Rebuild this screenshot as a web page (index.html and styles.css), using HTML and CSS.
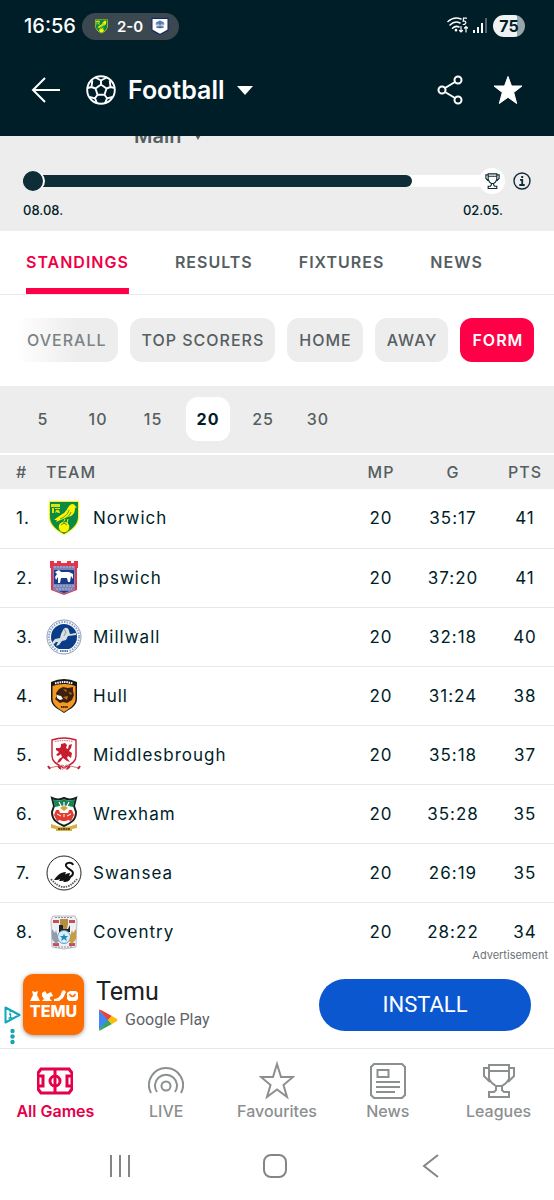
FILE: index.html
```html
<!DOCTYPE html>
<html lang="en">
<head>
<meta charset="utf-8">
<meta name="viewport" content="width=device-width, initial-scale=1">
<title>Football standings</title>
<link rel="stylesheet" href="styles.css">
</head>
<body>
<svg class="defs" aria-hidden="true">
  <symbol id="norwich" viewBox="0 0 36 36">
    <path d="M3 1h30v16c0 9-8 14-15 18C11 31 3 26 3 17z" fill="#fff200"/>
    <path d="M4 2h28v15c0 8-7 13-14 17C11 30 4 25 4 17z" fill="#0a8a43"/>
    <path d="M5 4h9v3H5z M6 8h2v5H6z m3 0h5v1H9z m1 2h3l1 3h-2l-1-1-2 1z" fill="#fff200" opacity=".85"/>
    <path d="M24 5c2-2 5-1 5 1l2 1-2 1c0 5-2 8-7 9l-5 2-7 3 1-2-3 0c3-3 7-5 10-7 3-3 4-6 6-8z" fill="#fff200"/>
    <path d="M23 10c-1 4-4 7-9 9M25 12c-1 3-3 5-6 7" fill="none" stroke="#0a8a43" stroke-width=".8"/>
    <path d="M19 19l-2 4m5-4l-1 4" stroke="#fff200"/>
    <circle cx="18" cy="27" r="5.300" fill="#fff200"/>
    <path d="M15 25l3-2 3 2m-3-4v3" fill="none" stroke="#0a8a43" stroke-width=".8"/>
  </symbol>
  <symbol id="trophy" viewBox="0 0 32 34">
    <path d="M7 2h19v5H7zM7 7v7l3 6 4 3h5l4-3 3-6V7M7 4H2v8l5 5M26 4h5v8l-5 5M14 23v3l-2 3H7v5h19v-5h-5l-2-3v-3" transform="scale(.97)"/>
  </symbol>
</svg>

<header class="top">
  <div class="status">
    <span class="clock">16:56</span>
    <span class="live">
      <svg class="live-home" viewBox="0 0 36 36"><use href="#norwich"/></svg>
      <span>2-0</span>
      <svg class="live-away" viewBox="0 0 20 20"><path d="M1 1h18v13l-9 5-9-5z" fill="#fff" stroke="#172a64" stroke-width="1.400"/><path d="M5 8c0-6 10-6 10 0zM6 9h8v2l-2 1H8l-2-1z" fill="#7896c4"/><path d="M6 6h8M10 3v9M6 11h8" stroke="#3b5687" stroke-width=".7"/></svg>
    </span>
    <span class="spacer"></span>
    <svg class="wifi" viewBox="0 0 22 18" fill="none" stroke="#fff" stroke-width="1.500" stroke-linecap="round"><path d="M1 4.500c4-3.500 9-4.200 13-2.500M3 8c3-3 7-3.500 10-2M5.500 11.300c2-2 4.500-2.300 6.500-1.300"/><circle cx="9" cy="13.200" r=".6"/><path d="M19.500 1.200h-3l-.3 3c3-1 4 3 0 3.300M14 9.500v5.500m-1.500-1.500L14 15l1.500-1.500M19 15V9.500m-1.500 1.500L19 9.500l1.500 1.500" stroke-width="1.200"/></svg>
    <svg class="signal" viewBox="0 0 14 16"><path d="M0 12h2v3H0zM4 9h2v6H4zM8 5h2v10H8z" fill="#fff"/><path d="M12 0h2v15h-2z" fill="#53656c"/></svg>
    <span class="battery">75</span>
  </div>
  <div class="bar">
    <button class="icon-btn" aria-label="Back"><svg class="back" viewBox="0 0 30 26" fill="none" stroke="#fff" stroke-width="2"><path d="M29 13H2M14 1L2 13l12 12"/></svg></button>
    <button class="sport">
      <svg class="ball" viewBox="0 0 30 30" fill="none" stroke="#fff" stroke-width="1.900" stroke-linejoin="round"><circle cx="15" cy="15" r="13.800"/><path d="M15 9.500l5.500 4-2 6.300h-7l-2-6.300zM15 9.500V5.500M20.500 13.500l4-1.500M18.500 19.800l2.500 3.500M11.500 19.800L9 23.300M9.500 13.500l-4-1.500M9.500 2.500L15 5.500l5.500-3M28.600 13l-4.100-1-.8-6.500M1.400 13l4.100-1 .8-6.500M26.500 22l-5.500 1.300-2 5M3.500 22L9 23.300l2 5"/></svg>
      <span>Football</span>
      <svg class="caret" viewBox="0 0 16 9"><path d="M0 0h16L8 9z" fill="#fff"/></svg>
    </button>
    <span class="spacer"></span>
    <button class="icon-btn" aria-label="Share"><svg class="share" viewBox="0 0 26 30" fill="none" stroke="#fff" stroke-width="2"><circle cx="21" cy="5" r="3.500"/><circle cx="5" cy="15" r="3.500"/><circle cx="21" cy="25" r="3.500"/><path d="M8 13l10-6M8 17l10 6"/></svg></button>
    <button class="icon-btn" aria-label="Favourite"><svg class="fav" viewBox="0 0 30 30"><path d="M15 1.500l3.500 9.500H29l-8.300 6.500 3 11L15 22.300l-8.700 6.200 3-11L1 11h10.500z" fill="#fff" stroke="#fff" stroke-linejoin="round"/></svg></button>
  </div>
</header>

<main>
  <section class="season">
    <div class="stage"><span>Main</span><svg viewBox="0 0 10 16"><path d="M1 4h8l-4 7z" fill="#555e61"/></svg></div>
    <div class="timeline">
      <div class="track" role="progressbar" aria-label="Season progress" aria-valuenow="81">
        <div class="fill"></div>
        <span class="start"></span>
        <span class="finish"><svg viewBox="0 0 32 34" fill="none" stroke="#0f2d37" stroke-width="2.500"><use href="#trophy"/></svg></span>
      </div>
      <button class="icon-btn" aria-label="Information"><svg class="info" viewBox="0 0 18 18" fill="none" stroke="#0f2d37"><circle cx="9" cy="9" r="8" stroke-width="1.400"/><path d="M7 7.800h2.200V13M6.300 13h5.400" stroke-width="1.800"/><path d="M8.200 5h2" stroke-width="2"/></svg></button>
    </div>
    <div class="dates"><span>08.08.</span><span>02.05.</span></div>
  </section>

  <nav class="tabs">
    <a href="#standings" class="active">STANDINGS</a><a href="#results">RESULTS</a><a href="#fixtures">FIXTURES</a><a href="#news">NEWS</a>
  </nav>

  <div class="chips">
    <button class="faded">OVERALL</button><button>TOP SCORERS</button><button>HOME</button><button>AWAY</button><button class="active">FORM</button>
  </div>

  <div class="counts">
    <button>5</button><button>10</button><button>15</button><button class="active">20</button><button>25</button><button>30</button>
  </div>

  <table class="standings">
    <colgroup><col class="col-rank"><col class="col-crest"><col><col class="col-num"><col class="col-goals"><col class="col-num"></colgroup>
    <thead><tr><th class="rank">#</th><th class="team" colspan="2">TEAM</th><th>MP</th><th>G</th><th>PTS</th></tr></thead>
    <tbody>
      <tr><td class="rank">1.</td><td class="crest"><svg viewBox="0 0 36 36"><use href="#norwich"/></svg></td><td class="name">Norwich</td><td>20</td><td>35:17</td><td>41</td></tr>
      <tr><td class="rank">2.</td><td class="crest"><svg viewBox="0 0 36 36"><path d="M4 1h4v2h3V1h4v2h6V1h4v2h3V1h4v7h-1v22l-13 5-13-5V8H4z" fill="#e6344d"/><path d="M7 6h22v24l-11 4-11-4z" fill="#7b82b6"/><path d="M8 10h20v14H8z" fill="#173c8b"/><path d="M9 12l4-2 2 2h8l4 2v5l-2-3-1 6h-2l-1-4h-6l-1 5h-2v-6l-2 3-1-3 2-3z" fill="#fff"/><path d="M8 7h20M8 26h20M10 29h16" stroke="#d2d5e7" stroke-dasharray="2 1" stroke-width=".7"/><path d="M13 31h10l-5 2z" fill="#173c8b"/></svg></td><td class="name">Ipswich</td><td>20</td><td>37:20</td><td>41</td></tr>
      <tr><td class="rank">3.</td><td class="crest"><svg viewBox="0 0 36 36"><circle cx="18" cy="18" r="17" fill="#fff" stroke="#6d84a8" stroke-width=".8"/><circle cx="18" cy="18" r="15" fill="none" stroke="#8ca2c5" stroke-width="2" stroke-dasharray="1.500 1.200"/><circle cx="18" cy="18" r="13" fill="#0a3c87"/><path d="M13 32h10" stroke="#fff" stroke-width="4"/><path d="M14 32h8" stroke="#4f71aa" stroke-width="2" stroke-dasharray="1.500 .7"/><path d="M17 11c2-4 6-2 6 1l1 3 6-1v2l-8 1-2 4-4 1-3 4-3 1 2-4-2 0-3 3-2-1 4-5 5-1 1-4z" fill="#d8dfdf"/><path d="M18 10l2 3-2 4" fill="none" stroke="#8a9997"/></svg></td><td class="name">Millwall</td><td>20</td><td>32:18</td><td>40</td></tr>
      <tr><td class="rank">4.</td><td class="crest"><svg viewBox="0 0 36 36"><path d="M5 4q13-6 26 0v17c0 7-7 10-13 14C12 31 5 28 5 21z" fill="#171717"/><path d="M6.500 8q12-4 23 0v13c0 5-5 9-11.500 13C11 30 6.500 26 6.500 21z" fill="#f49a22"/><path d="M9 5.500q9-3 18 0" fill="none" stroke="#fff" stroke-width="2" stroke-dasharray="1.500 .8"/><path d="M13 11l4-2 5 1 5-1v4l1 4-2 5-5 3-4-1-3 1-5-4 2-3-1-3z" fill="#3c210f"/><path d="M17 11l4 1-1 2zM22 14l4 1-1 2zM17 19l5-1-1 4z" fill="#bc6b1c"/><path d="M11 17l4 1 2 3-3 1-3-2z" fill="#fff"/><path d="M15 29h7" stroke="#3c210f" stroke-width="2" stroke-dasharray="1.500 .6"/></svg></td><td class="name">Hull</td><td>20</td><td>31:24</td><td>38</td></tr>
      <tr><td class="rank">5.</td><td class="crest"><svg viewBox="0 0 36 36"><path d="M6 3q12-4 24 0v16c0 6-5 8-12 12C11 27 6 25 6 19z" fill="#fff" stroke="#c51e30" stroke-width="1.400"/><path d="M9 4.500q9-2 18 0" fill="none" stroke="#da7a83" stroke-width="1.200" stroke-dasharray="1.500 .8"/><path d="M15 7l4-1 2 2-1 3 2 1 1-4 3-1-1 4-2 3 3 2-1 5-3-2-1 2 3 4-3-1-4-3-3 4-3 1 2-4 3-2-1-3-3 2-2-1 3-3-3-2v-2h4l1-2z" fill="#c81c2f"/><path d="M3 31l14-3 4 5M33 31l-13-3-4 5" fill="none" stroke="#d17a82"/><path d="M2 29l2 3M34 29l-2 3M12 29l3 3M24 29l-3 3" stroke="#c51e30" stroke-width="2"/></svg></td><td class="name">Middlesbrough</td><td>20</td><td>35:18</td><td>37</td></tr>
      <tr><td class="rank">6.</td><td class="crest"><svg viewBox="0 0 36 36"><path d="M6 2q6 3 12 0 6 3 12 0l-2 8 2 6c0 8-5 11-12 14C11 27 6 24 6 16l2-6z" fill="#fff" stroke="#17231c" stroke-width="2"/><path d="M7 3q6 3 11 0 5 3 11 0l-2 8q-9-3-18 0z" fill="#188454"/><path d="M18 10V6m-3 4l-2-4m8 4l2-4" stroke="#fff" stroke-width="1.200"/><path d="M8 19l2-5 3 0 1 3h8l1-3h3l2 5-3 6-3-1-2 1h-4l-2-1-3 1z" fill="#e33b2f"/><path d="M11 18l4 2m10-2l-4 2M18 18v3" stroke="#fff"/><path d="M14 12q4-4 8 0l-4 3z" fill="#d2a63a"/><path d="M5 28l6 2q7 2 14 0l6-2v4l-5 1v2H10v-2l-5-1z" fill="#d7b140"/><path d="M12 33h12" stroke="#655323" stroke-width="2" stroke-dasharray="2 .5"/></svg></td><td class="name">Wrexham</td><td>20</td><td>35:28</td><td>35</td></tr>
      <tr><td class="rank">7.</td><td class="crest"><svg viewBox="0 0 36 36"><circle cx="18" cy="18" r="17" fill="#fff" stroke="#222"/><path d="M27 10c-1-3-8-3-7 1 1 3 7 4 7 7 0 2-2 4-6 5" fill="none" stroke="#111" stroke-width="2"/><path d="M20 17c-6 0-9 4-12 8 6 0 10-1 12-8zM24 18c-5 0-8 4-11 8 6 0 10-1 11-8zM25 22c-3-1-5 2-8 5 5 0 7-1 8-5z" fill="#111"/><path d="M5 24q13 16 26 0" fill="none" stroke="#555" stroke-width="1.800" stroke-dasharray="1.500 1"/></svg></td><td class="name">Swansea</td><td>20</td><td>26:19</td><td>35</td></tr>
      <tr><td class="rank">8.</td><td class="crest"><svg viewBox="0 0 36 36"><path d="M7 2h22l2 4-1 27-12 2-12-2L5 6z" fill="#eef0f2" stroke="#b8bcc2"/><path d="M7 6h6v3H7zM23 6h6v3h-6zM7 29h6v3H7zM23 29h6v3h-6z" fill="#c2515d"/><path d="M14 5h8v5l-1 5h-6l-1-5z" fill="#b58d3e"/><path d="M13 11h4v4h5l2-4v7H13z" fill="#20242c"/><circle cx="18" cy="23" r="6.500" fill="#d7effb" stroke="#609ebd"/><path d="M18 19.500l1 2.500h3l-2 2 1 3-3-2-3 2 1-3-2-2h3z" fill="#2388bd"/><path d="M6 15l3 4 1-3 3 11-3 3-4-5z" fill="#929cad"/><path d="M30 15l-3 4-1-3-3 11 3 3 4-5z" fill="#c79c45"/><path d="M9 3.500h18M9 33h18" stroke="#8d8fa0" stroke-dasharray="2 1"/></svg></td><td class="name">Coventry</td><td>20</td><td>28:22</td><td>34</td></tr>
    </tbody>
  </table>
</main>

<aside class="ad">
  <span class="ad-label">Advertisement</span>
  <svg class="choices" viewBox="0 0 17 40" fill="none" stroke="#14a5b8"><path d="M1.500 2.500v15l14-7.500z" stroke-width="2" stroke-linejoin="round"/><path d="M5 9h1.500v4M4.500 13h4M5.500 6.500H7" stroke-width="1.400"/><g fill="#14a5b8" stroke="none"><circle cx="8.500" cy="26" r="2.200"/><circle cx="8.500" cy="31.500" r="2.200"/><circle cx="8.500" cy="37" r="2.200"/></g></svg>
  <div class="app-icon">
    <svg viewBox="0 0 48 12" fill="#fff"><path d="M2 1l3 1 3-1-1 4 3 6H0l3-6zM12 3l3-2 2 3 4-2 2 4-3 1v2l2 2H12l2-2-2-3zM34 0l2 2-3 6-4 3h-5v-2c5 0 7-4 8-8zM40 1h6l2 2v6l-2 2h-7l-2-2V3z"/><path d="M39.500 4q3 5 6 0" fill="none" stroke="#ff6c00" stroke-width="1.500"/></svg>
    <span>TEMU</span>
  </div>
  <div class="app">
    <span class="app-name">Temu</span>
    <span class="store"><svg viewBox="0 0 20 22"><path d="M1 1l10 10L1 21z" fill="#4285f4"/><path d="M1 1q0-1 2 0l11 6-4 4z" fill="#ea4335"/><path d="M1 21q0 1 2 0l11-6-4-4z" fill="#34a853"/><path d="M14 7l5 3q1 1 0 2l-5 3-4-4z" fill="#fbbc04"/></svg>Google Play</span>
  </div>
  <button class="install">INSTALL</button>
</aside>

<nav class="bottom">
  <a href="#games" class="active"><svg viewBox="0 0 36 40"><path d="M4 8h28l3 4v16l-3 4H4l-3-4V12zM18 8v24M1 15h5v10H1M35 15h-5v10h5"/><circle cx="18" cy="20" r="5"/></svg>All Games</a>
  <a href="#live"><svg viewBox="0 0 36 40"><circle cx="18" cy="25" r="4.500"/><path d="M9 31a11 11 0 1 1 18 0M3 32a17 17 0 1 1 30 0"/></svg>LIVE</a>
  <a href="#favourites"><svg viewBox="0 0 36 40"><path d="M18 3l4 13h12l-9.500 8L28 36l-10-7.500L8 36l3.500-12L2 16h12z"/></svg>Favourites</a>
  <a href="#news-feed"><svg viewBox="0 0 36 40"><path d="M4 3h28l3 3v28l-3 3H4l-3-3V6zM7.500 9h11v7h-11zM6 21h24M6 26h24M6 31h19"/></svg>News</a>
  <a href="#leagues"><svg viewBox="0 0 36 40"><path d="M8 4h20v6H8zM8 10v8l3 4 4 3h6l4-3 3-4v-8M8 7H3v8l6 6M28 7h5v8l-6 6M15 25v4l-2 2H8v5h20v-5h-5l-2-2v-4"/></svg>Leagues</a>
</nav>

<div class="system">
  <button aria-label="Recent apps"><svg viewBox="0 0 24 24"><path d="M3 1v22M12 1v22M21 1v22"/></svg></button>
  <button aria-label="Home"><svg viewBox="0 0 24 24"><rect x="1" y="1" width="22" height="22" rx="7"/></svg></button>
  <button aria-label="System back"><svg viewBox="0 0 24 24"><path d="M19 1L5 12l14 11"/></svg></button>
</div>
</body>
</html>
```

FILE: styles.css
```css
* { box-sizing: border-box; }
body {
  margin: 0;
  min-height: 100vh;
  background: #fff;
  color: #001e28;
  font-family: Inter, "Noto Sans", sans-serif;
  font-size: 16px;
}
button {
  margin: 0;
  padding: 0;
  border: 0;
  background: none;
  color: inherit;
  font: inherit;
}
a { color: inherit; text-decoration: none; }
svg { display: block; }
.defs { display: none; }
.spacer { flex: 1; }

.top { background: #001e28; color: #fff; padding-bottom: 8px; }
.status {
  display: flex;
  align-items: center;
  height: 52px;
  padding: 0 29px 0 24px;
}
.clock { font-size: 20px; font-weight: 500; margin-right: 6px; }
.live {
  display: flex;
  align-items: center;
  gap: 8px;
  height: 27px;
  padding: 0 10px 0 12px;
  border-radius: 14px;
  background: #3b484f;
  font-size: 15px;
  font-weight: 600;
}
.live-home { width: 15px; height: 15px; }
.live-away { width: 18px; height: 19px; }
.wifi { width: 22px; height: 18px; margin-right: 4px; }
.signal { width: 14px; height: 16px; margin-right: 6px; }
.battery {
  width: 32px;
  border-radius: 11px;
  background: linear-gradient(90deg, #eef2f3 75%, #98a6aa 75%);
  color: #001e28;
  font-weight: 700;
  line-height: 22px;
  text-align: center;
}
.bar {
  display: flex;
  align-items: center;
  height: 76px;
  padding: 0 31px;
}
.back { width: 30px; height: 26px; }
.sport {
  display: flex;
  align-items: center;
  gap: 12px;
  margin-left: 25px;
  font-size: 25px;
  font-weight: 600;
}
.ball { width: 30px; height: 30px; }
.caret { width: 16px; height: 9px; }
.share { width: 26px; height: 30px; margin-right: 30px; }
.fav { width: 30px; height: 30px; }

.season { background: #ededed; height: 95px; }
.stage {
  display: flex;
  align-items: flex-end;
  gap: 12px;
  height: 9px;
  padding-left: 134px;
  overflow: hidden;
  color: #555e61;
  font-size: 20px;
  font-weight: 600;
  line-height: 18px;
}
.stage svg { width: 10px; height: 16px; }
.timeline {
  display: flex;
  align-items: center;
  gap: 10px;
  margin-top: 27px;
  padding: 0 23px;
}
.track {
  position: relative;
  flex: 1;
  height: 12px;
  border-radius: 6px;
  background: #fff;
}
.fill { width: 81%; height: 12px; border-radius: 6px; background: #0f2d37; }
.start, .finish { position: absolute; border-radius: 50%; }
.start {
  top: -4px;
  left: 0;
  width: 20px;
  height: 20px;
  background: #0f2d37;
  box-shadow: 2px 0 0 #fff;
}
.finish {
  top: -7px;
  right: -2px;
  display: grid;
  place-items: center;
  width: 26px;
  height: 26px;
  background: #fff;
}
.finish svg { width: 15px; height: 16px; }
.info { width: 18px; height: 18px; }
.dates {
  display: flex;
  justify-content: space-between;
  margin-top: 12px;
  padding: 0 51px 0 23px;
  font-size: 13px;
  font-weight: 500;
  line-height: 16px;
}

.tabs {
  display: flex;
  gap: 46px;
  height: 64px;
  padding-left: 26px;
  border-bottom: 1px solid #e9eaeb;
  color: #555e61;
  font-weight: 600;
  line-height: 62px;
}
.tabs a, .chips button, .counts button, .standings { letter-spacing: 1px; }
.tabs .active {
  color: #ee0046;
  background: linear-gradient(#ff0046, #ff0046) bottom / 100% 6px no-repeat;
}

.chips {
  display: flex;
  gap: 12px;
  padding: 23px 15px 24px;
}
.chips button {
  height: 44px;
  padding: 0 11px 0 12px;
  border-radius: 12px;
  background: #ededed;
  color: #555e61;
  font-weight: 500;
  white-space: nowrap;
}
.chips .active { background: #ff0046; color: #fff; font-weight: 600; }
.chips .faded {
  background: linear-gradient(90deg, #fff, #ededed 60%);
  color: #7c8385;
}

.counts {
  display: flex;
  gap: 11px;
  padding: 11px 21px 12px;
  background: #ededed;
}
.counts button {
  width: 44px;
  height: 44px;
  border-radius: 12px;
  color: #555e61;
  font-weight: 500;
}
.counts .active { background: #fff; color: #001e28; font-weight: 700; }

.standings {
  width: 100%;
  margin-top: 2px;
  border-collapse: collapse;
  table-layout: fixed;
  font-size: 18px;
  text-align: center;
}
.col-rank { width: 46px; }
.col-crest { width: 34px; }
.col-num { width: 58px; }
.col-goals { width: 86px; }
.standings th {
  height: 34px;
  padding: 0;
  background: #ededed;
  color: #555e61;
  font-size: 16px;
  font-weight: 500;
}
.standings td { height: 59px; padding: 0; font-size: 17px; }
.standings tbody tr + tr { border-top: 1px solid #e6e8e9; }
.standings .rank { padding-left: 16px; text-align: left; }
.standings .team { text-align: left; }
.standings .name { padding-left: 13px; text-align: left; }
.crest svg { width: 36px; height: 36px; }

.ad {
  position: relative;
  display: flex;
  align-items: center;
  height: 87px;
  padding: 0 23px 0 4px;
}
.ad-label {
  position: absolute;
  top: -13px;
  right: 6px;
  color: #6d7476;
  font-size: 11px;
  line-height: 14px;
}
.choices { align-self: flex-end; width: 17px; height: 40px; margin: 0 2px 3px 0; }
.app-icon {
  display: flex;
  flex-direction: column;
  align-items: center;
  justify-content: center;
  width: 61px;
  height: 61px;
  border-radius: 10px;
  background: #ff6c00;
  box-shadow: 0 1px 4px #0006;
  color: #fff;
  font-size: 16px;
  font-weight: 800;
  line-height: 18px;
}
.app-icon svg { width: 48px; height: 12px; }
.app { display: flex; flex-direction: column; margin-left: 12px; }
.app-name { color: #202124; font-family: Roboto, sans-serif; font-size: 25px; line-height: 30px; }
.store {
  display: flex;
  align-items: center;
  gap: 7px;
  padding-left: 2px;
  color: #5f6368;
  font-family: Roboto, sans-serif;
  font-size: 16px;
  line-height: 26px;
}
.store svg { width: 20px; height: 22px; }
.install {
  width: 212px;
  height: 52px;
  margin-left: auto;
  border-radius: 26px;
  background: #0b57d0;
  color: #fff;
  font-family: Roboto, sans-serif;
  font-size: 22px;
}

.bottom {
  display: grid;
  grid-template-columns: repeat(5, 1fr);
  padding: 12px 0 11px;
  border-top: 1px solid #e6e8e9;
  color: #8c8f90;
  font-size: 16px;
  font-weight: 500;
  line-height: 20px;
}
.bottom a { display: flex; flex-direction: column; align-items: center; }
.bottom .active { color: #e4004b; font-weight: 600; }
.bottom svg {
  width: 36px;
  height: 40px;
  fill: none;
  stroke: currentColor;
  stroke-width: 2;
}
.bottom .active svg { stroke-width: 3; }
.system {
  display: grid;
  grid-template-columns: repeat(3, 1fr);
  padding: 22px 45px 22px 42px;
}
.system button { display: grid; place-items: center; }
.system svg {
  width: 24px;
  height: 24px;
  fill: none;
  stroke: #858585;
  stroke-width: 2;
}
```
